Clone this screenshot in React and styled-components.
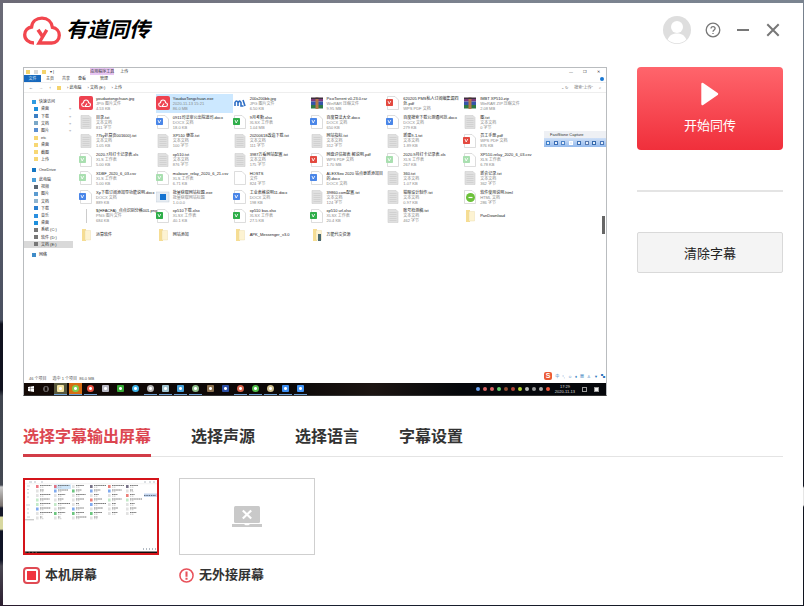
import React, { useState } from "react";
import styled, { createGlobalStyle } from "styled-components";

const files = [
    ["youdao", "youdaotongchuan.jpg", "JPG 图片文件", "4.53 KB"],
    ["youdao", "YoudaoTongchuan.exe", "2020-11-13 15:21", "86.0 MB"],
    ["m", "200x200bb.jpg", "JPG 图片文件", "6.50 KB"],
    ["zip", "PicoTorrent v0.23.0.rar", "WinRAR 压缩文件", "9.95 MB"],
    ["pdf", "620205 PMS私人订阅编集漏四处.pdf", "WPS PDF 文档"],
    ["zip", "IMBT XP510.zip", "WinRAR ZIP 压缩文件", "2.08 MB"],
    ["txt", "目录.txt", "文本文档", "811 字节"],
    ["doc", "0911司法审公出院遗司.docx", "DOCX 文档", "18.0 KB"],
    ["xls", "9月考勤.xlsx", "XLSX 工作表", "1.04 MB"],
    ["doc", "百度算法大全.docx", "DOCX 文档", "650 KB"],
    ["doc", "百度搜索下载公测通问范.docx", "DOCX 文档", "279 KB"],
    ["txt", "图.txt", "文本文档", "0 字节"],
    ["txt", "77ky扒算页001600).txt", "文本文档", "1.05 KB"],
    ["txt", "XP510 便签.txt", "文本文档", "100 字节"],
    ["txt", "20200618改造下载.txt", "文本文档", "111 字节"],
    ["txt", "网站指标.txt", "文本文档", "312 字节"],
    ["txt", "新建9-1.txt", "文本文档", "1.89 KB"],
    ["pdf", "员工手册.pdf", "WPS PDF 文档", "876 KB"],
    ["csv", "2020.7月打卡记录表.xls", "XLS 工作表", "5.00 KB"],
    ["txt", "xp510.txt", "文本文档", "876 字节"],
    ["txt", "3987万看网站配置.txt", "文本文档", "175 字节"],
    ["pdf", "网盘评估报表·解说明.pdf", "WPS PDF 文档", "1.70 MB"],
    ["csv", "2020.9月打卡记录表.xls", "XLS 工作表", "267 KB"],
    ["csv", "XP510-relay_2020_6_03.csv", "XLS 工作表", "6.78 KB"],
    ["csv", "XDBF_2020_6_03.csv", "XLS 工作表", "5.00 KB"],
    ["csv", "malware_relay_2020_6_21.csv", "XLS 工作表", "6.71 KB"],
    ["blank", "HOSTS", "文件", "824 字节"],
    ["doc", "ALEXSeo 2020 站点更新添加目的.docx", "DOCX 文档"],
    ["txt", "360.txt", "文本文档", "1.07 KB"],
    ["txt", "新会记录.txt", "文本文档", "362 字节"],
    ["doc", "Xp下载订阅添加导功能说明.docx", "DOCX 文档", "889 KB"],
    ["exe", "批量获取网站标题.exe", "批量获取网站标题", "1.0.0.0"],
    ["doc", "工业表格说明11.docx", "DOCX 文档", "198 KB"],
    ["txt", "39860.com配置.txt", "文本文档", "124 字节"],
    ["txt", "猫眼设计制作.txt", "文本文档", "0.97 KB"],
    ["html", "软件使用说明.html", "HTML 文档", "286 字节"],
    ["line", "$(HFACFA)_点点识别分格001.png", "PNG 图片文件", "684 KB"],
    ["xls", "xp510下载.xlsx", "XLSX 工作表", "40.1 KB"],
    ["xls", "xp510 bas.xlsx", "XLSX 工作表", "27.5 KB"],
    ["xls", "xp510 url.xlsx", "XLSX 工作表", "20.4 KB"],
    ["txt", "账号检测稿.txt", "文本文档", "462 字节"],
    ["folder", "PanDownload"],
    ["folder", "运算软件"],
    ["folder", "网站添加"],
    ["folder", "APK_Messenger_v3.0"],
    ["folder2", "万能代交资源"],
];

const places = [
    { rows: ["快速访问", "桌面", "下载", "文档", "图片", "etc", "桌面", "截图", "上传"], colors: ["#2f9be0", "#1d8fdc", "#3b7fc4", "#7aa7c7", "#5b8fd0", "#f7d774", "#f7d774", "#f7d774", "#f7d774"] },
    { rows: ["OneDrive"], colors: ["#1577c4"] },
    { rows: ["此电脑", "视频", "图片", "文档", "下载", "音乐", "桌面", "系统 (C:)", "软件 (D:)", "文档 (E:)"], colors: ["#4b9ed8", "#5b6672", "#5b9bd0", "#8fb4cf", "#2a7fd0", "#2a8fe0", "#1d8fdc", "#777", "#777", "#777"] },
    { rows: ["网络"], colors: ["#3f8cc8"] },
];

const apps = [
    ["#f2e3a0", "#57573c"], ["#7dcf4f", "#d56d14"], ["#e9503f"], ["#b9b9c4"], ["#35a935"], ["#3fb4e8"],
    ["#b8b8b8"], ["#9fc3cf"], ["#45a0d8"], ["#8fbf8b"], ["#8a704e"], ["#2c4fa5"], ["#d9624a"], ["#52c14c"],
    ["#cfc08e"], ["#3c8df0"], ["#4295f5"],
];

const tray = ["#6aa0ee", "#d86464", "#d86464", "#63c96b", "#8d4a30", "#b04438", "#b5d332", "#bbb", "#999", "#aaa", "#f0573b"];

const tabs = ["选择字幕输出屏幕", "选择声源", "选择语言", "字幕设置"];

const badge = { doc: "#4a86e8", xls: "#2fae4a", pdf: "#e3493f", csv: "#a9dfb0" };

function Logo() {
    return (
        <svg width="38" height="29" viewBox="0 0 38 29" fill="none" stroke="#f2464e" strokeWidth="3.3" aria-hidden="true">
            <path d="M11 27C5.5 27 1.7 23.3 1.7 18.7C1.7 14.2 5 11.6 8.6 11C9.2 5.6 13.4 2.2 19 2.2C24.6 2.2 28.7 5.8 29.4 11.4C33.4 12 36.3 15.2 36.3 19.3C36.3 23.8 33 27 28.8 27H16L23.8 13.8" />
            <path d="M15 13.8L19.6 20.6" strokeWidth="3.6" />
        </svg>
    );
}

function FileIcon({ type }) {
    const sheet = <path d="M1.5 .5H9L12.5 4V13.5H1.5Z" fill="#fff" stroke="#cfcfcf" strokeWidth=".7" />;
    return (
        <svg width="14" height="14" viewBox="0 0 14 14" aria-hidden="true">
            {type === "youdao" && (
                <g>
                    <rect width="14" height="14" rx="2" fill="#ee4250" />
                    <path d="M5 10.5C2 10.5 2 7 4.5 6.7C4.8 3 9.2 3 9.6 6.7C12.3 7 12 10.5 9.5 10.5H6L8 7.5" fill="none" stroke="#fff" strokeWidth="1.1" />
                </g>
            )}
            {type === "m" && (
                <g>
                    <rect x=".5" width="13" height="14" fill="#fff" />
                    <path d="M2 10V6.5Q3.5 3.5 5 6.5V10M5 7Q6.5 3.5 8 6.5V10H10.5M10 4L12 10" fill="none" stroke="#2f6fc5" strokeWidth="1.6" />
                </g>
            )}
            {type === "zip" && (
                <g>
                    <rect x="1" y="2" width="12" height="3.5" fill="#7c3b7e" />
                    <rect x="1" y="5.5" width="12" height="3.5" fill="#3457a8" />
                    <rect x="1" y="9" width="12" height="3.5" fill="#2f7a45" />
                    <rect x="5.5" y="1.5" width="3" height="11.5" fill="#b5794a" />
                    <rect x="1" y="1.5" width="12" height="1.5" fill="#3d2f3c" />
                </g>
            )}
            {type === "txt" && (
                <g>
                    <path d="M2 .5H10L12 2.5V13.5H2Z" fill="#e0e0e0" stroke="#cdcdcd" strokeWidth=".6" />
                    <path d="M3.5 3.5H10.5M3.5 5.5H10.5M3.5 7.5H10.5M3.5 9.5H10.5M3.5 11.5H10.5" stroke="#c6c6c6" strokeWidth=".6" />
                </g>
            )}
            {type === "blank" && sheet}
            {badge[type] && (
                <g>
                    {sheet}
                    <rect x="0" y="3" width="7" height="7" rx=".7" fill={badge[type]} />
                    <path d="M2 5L3.2 8L4.8 5" fill="none" stroke="#fff" strokeWidth=".8" />
                </g>
            )}
            {type === "exe" && (
                <g>
                    <rect x="0" y="2" width="13" height="10" fill="#e7edf3" stroke="#c2ccd6" strokeWidth=".5" />
                    <rect x="4" y="4" width="6" height="6" fill="#1674d1" />
                </g>
            )}
            {type === "html" && (
                <g>
                    {sheet}
                    <circle cx="7.5" cy="7.5" r="4.5" fill="#6cc13a" />
                    <path d="M5.5 7.5H9.5" stroke="#fff" strokeWidth="1.2" />
                </g>
            )}
            {type === "line" && <path d="M7.5 0V14" stroke="#ccc" />}
            {(type === "folder" || type === "folder2") && (
                <g>
                    <path d="M3 1H7V13H3Z" fill="#f6dd93" />
                    <path d="M6 2.5H11.5V12H6Z" fill="#fdf3d2" stroke="#ead9a5" strokeWidth=".4" />
                    {type === "folder2" && <path d="M8 6H11V13H8Z" fill="#4b6a70" />}
                </g>
            )}
        </svg>
    );
}

// Small schematic of the desktop, used in the screen picker
function DesktopThumb() {
    return (
        <ThumbSvg viewBox="0 0 132 73" preserveAspectRatio="none" aria-hidden="true">
            <rect width="132" height="73" fill="#fff" />
            <path d="M4 2H7M9 2H11M16 2H18M119 2H121M124 2H126M128 2H130" stroke="#9aa5b0" strokeWidth=".7" />
            <path d="M0 3.7H132" stroke="#ececec" strokeWidth=".6" />
            <rect x="29" y="4.5" width="17" height="4.5" fill="#cfe6fa" />
            {files.map(([type, name], i) => {
                const x = 11 + (i % 6) * 18;
                const y = 5 + Math.floor(i / 6) * 4.5;
                return (
                    <g key={i}>
                        <rect x={x} y={y} width="2.6" height="3" fill={type === "youdao" ? "#e8404e" : type === "zip" ? "#3e3654" : badge[type] || "#d6d6d6"} opacity=".7" />
                        <path d={`M${x + 4} ${y + .5}h${Math.min(name.length * .6, 12)}`} stroke="#555" strokeWidth=".8" strokeDasharray="1.6 .5" />
                        <path d={`M${x + 4} ${y + 2.2}h4`} stroke="#aaa" strokeWidth=".6" strokeDasharray="1.2 .6" />
                    </g>
                );
            })}
            <path d="M2 6H5M2 9.5H4M2 13H4M2 17H4M1 25H5M2 29H4M2 33H4M2 37H5" stroke="#b4bdc6" strokeWidth=".7" />
            <rect y="39" width="9" height="1.4" fill="#ccc" />
            <rect x="119" y="13.5" width="13" height="3.4" fill="#c5d6f0" />
            <path d="M119 15.5H131" stroke="#456" strokeWidth=".8" strokeDasharray="1.5 .8" />
            <path d="M118 69H131" stroke="#678" strokeDasharray="1 2" />
            <rect y="71.5" width="132" height="1.5" fill="#120d0d" />
            <path d="M0 72H14" stroke="#a98" strokeWidth=".8" strokeDasharray="1.5 2" />
        </ThumbSvg>
    );
}

function Desktop() {
    return (
        <Screen>
            <TitleRow>
                <Dot color="#f4d36d" /><Dot color="#d9d9d9" /><Dot color="#f4d36d" />
                <span>▾ |</span>
                <ToolTab>应用程序工具</ToolTab>
                <span>上传</span>
                <Caption><span>—</span><span>❐</span><span>✕</span></Caption>
            </TitleRow>
            <RibbonRow>
                <FileTab>文件</FileTab>
                <span>主页</span><span>共享</span><span>查看</span><ManageTab>管理</ManageTab>
                <HelpDot />
            </RibbonRow>
            <AddressRow>
                <span>←</span><Faint>→</Faint><span>↑</span>
                <Dot color="#f4d36d" />
                <span>› 此电脑</span><span>› 文档 (E:)</span><span>› 上传</span>
                <Search><span>⌄ ↻</span><span>搜索"上传"</span><span>⌕</span></Search>
            </AddressRow>
            <Explorer>
                <Side>
                    {places.map((group, g) => (
                        <Group key={g} count={group.rows.length}>
                            {group.rows.map((row, i) => (
                                <Place key={i} $root={i === 0} $active={row === "文档 (E:)"}>
                                    <Dot color={group.colors[i]} />
                                    <span>{row}</span>
                                    {g === 0 && i > 0 && i < 5 && <Pin>⌖</Pin>}
                                </Place>
                            ))}
                        </Group>
                    ))}
                </Side>
                <Files>
                    {files.map(([type, name, kind, size], i) => (
                        <File key={i} $active={i === 1}>
                            <FileIcon type={type} />
                            <FileText>
                                <FileName $wrap={!size}>{name}</FileName>
                                {kind && <div>{kind}</div>}
                                {size && <div>{size}</div>}
                            </FileText>
                        </File>
                    ))}
                </Files>
                <ScrollTrack><ScrollThumb /></ScrollTrack>
            </Explorer>
            <Status><span>46 个项目</span><span>选中 1 个项目&nbsp; 86.0 MB</span></Status>
            <Taskbar>
                <AppSlot>
                    <svg width="6" height="6" viewBox="0 0 6 6"><path d="M0 1L2.7 .6V2.8H0ZM3 .5L6 0V2.8H3ZM0 3.1H2.7V5.4L0 5ZM3 3.1H6V6L3 5.5Z" fill="#fff" /></svg>
                </AppSlot>
                <AppSlot>
                    <svg width="6" height="6" viewBox="0 0 6 6"><path d="M1.3 .7H4.7V5.3H1.3ZM.3 1.5V4.5M5.7 1.5V4.5" fill="none" stroke="#aaa" strokeWidth=".6" /></svg>
                </AppSlot>
                {apps.map(([color, back], i) => (
                    <AppSlot key={i} $back={back} $open={![3, 4, 5, 10, 11].includes(i)}>
                        <AppMark $color={color} $round={[1, 2, 5, 6, 9, 12, 13, 14].includes(i)} />
                    </AppSlot>
                ))}
                <Tray>
                    {tray.map((color, i) => <TrayDot key={i} $color={color} />)}
                    <Clock><span>17:29</span><span>2020-11-13</span></Clock>
                    <TrayBox /><TrayBox $solid />
                </Tray>
            </Taskbar>
            <Capture>
                <CaptureTitle>FastStone Capture</CaptureTitle>
                <CaptureTools>
                    {["#3e7fc9", "#3b6db5", "#4d83c8", "#fff", "#3e6fb2", "#5a7bb0", "#3468ab", "#4a77b8"].map((c, i) => <ToolMark key={i} $color={c} />)}
                </CaptureTools>
            </Capture>
            <Ime>
                <ImeLogo>S</ImeLogo>
                <span>中</span><span>°,</span><span>☺</span><span>♦</span><span>▦</span><span>♙</span><span>▼</span><span>▚</span>
            </Ime>
        </Screen>
    );
}

function App() {
    const [tab, setTab] = useState(0);
    return (
        <Frame>
            <Global />
            <Window>
                <Header>
                    <Brand><Logo /><BrandName>有道同传</BrandName></Brand>
                    <Avatar aria-label="账号">
                        <svg width="28" height="28" viewBox="0 0 28 28">
                            <circle cx="14" cy="14" r="14" fill="#dedede" />
                            <circle cx="14" cy="11" r="6" fill="#fff" />
                            <path d="M4.7 23.5C6.5 18.8 10 17.4 14 17.4C18 17.4 21.5 18.8 23.3 23.5A13.2 13.2 0 0 1 4.7 23.5Z" fill="#fff" />
                        </svg>
                    </Avatar>
                    <HeadButton aria-label="帮助">
                        <svg width="16" height="16" viewBox="0 0 16 16" fill="none" stroke="#777" strokeWidth="1.3">
                            <circle cx="8" cy="8" r="6.8" />
                            <path d="M6 6.6C6 3.9 10.1 4 10.1 6.5C10.1 8 8 7.9 8 9.7M8 10.9V12.1" />
                        </svg>
                    </HeadButton>
                    <HeadButton aria-label="最小化">
                        <svg width="16" height="16" viewBox="0 0 16 16" stroke="#777" strokeWidth="2"><path d="M2 8H14" /></svg>
                    </HeadButton>
                    <HeadButton aria-label="关闭">
                        <svg width="16" height="16" viewBox="0 0 16 16" stroke="#777" strokeWidth="2"><path d="M2.3 2.3L13.7 13.7M13.7 2.3L2.3 13.7" /></svg>
                    </HeadButton>
                </Header>
                <Main>
                    <Desktop />
                    <Actions>
                        <StartButton>
                            <svg width="18" height="24" viewBox="0 0 18 24"><path d="M1.5 2L16 12L1.5 22Z" fill="#fff" stroke="#fff" strokeWidth="2.4" strokeLinejoin="round" /></svg>
                            开始同传
                        </StartButton>
                        <Divider />
                        <ClearButton>清除字幕</ClearButton>
                    </Actions>
                </Main>
                <Tabs>
                    {tabs.map((name, i) => (
                        <Tab key={name} $active={i === tab} onClick={() => setTab(i)}>{name}</Tab>
                    ))}
                </Tabs>
                <Screens>
                    <Choice>
                        <Thumb $active><DesktopThumb /></Thumb>
                        <ChoiceName>
                            <Radio type="radio" name="screen" defaultChecked />
                            本机屏幕
                        </ChoiceName>
                    </Choice>
                    <Choice as="div">
                        <Thumb>
                            <svg width="30" height="22" viewBox="0 0 30 22" aria-hidden="true">
                                <rect x="2" y="0" width="26" height="17" rx="1.5" fill="#c9c9c9" />
                                <path d="M0 18H12L13.5 19.2H16.5L18 18H30V21H0Z" fill="#c9c9c9" />
                                <path d="M10.8 4.5L19.2 12.5M19.2 4.5L10.8 12.5" stroke="#fff" strokeWidth="2.2" />
                            </svg>
                        </Thumb>
                        <ChoiceName>
                            <svg width="15" height="15" viewBox="0 0 16 16" fill="none" stroke="#e8515a" aria-hidden="true">
                                <circle cx="8" cy="8" r="7" strokeWidth="1.6" />
                                <path d="M8 3.8V9.2M8 10.4V12.4" strokeWidth="2.2" />
                            </svg>
                            无外接屏幕
                        </ChoiceName>
                    </Choice>
                </Screens>
            </Window>
        </Frame>
    );
}

const Global = createGlobalStyle`
    * { box-sizing: border-box; }
    body {
        margin: 0;
        font-family: "Liberation Sans", "Noto Sans CJK SC", sans-serif;
        color: #222;
    }
    button {
        font-family: inherit;
        padding: 0;
        border: 0;
        background: none;
        cursor: pointer;
    }
    svg { display: block; flex: none; }
`

const Frame = styled.div`
    display: flex;
    min-height: 100vh;
    padding: 3px 1px 3px 3px;
    background:
        linear-gradient(90deg, #6c6a76, #7c838f 60%, #7a8490) top / 100% 3px no-repeat,
        linear-gradient(90deg, #2a1c2e, #1a2233 30%, #141722) bottom / 100% 3px no-repeat,
        linear-gradient(#6b6b77, #4a5060 320px, #10121f 324px, #10121f 390px, #40454f 396px, #434852 485px, #c9c9c9 487px, #77706c 506px, #15182a 508px, #15182a 516px, #d8d8a0 517px, #d8d8a0 529px, #101426 531px, #101426 560px, #4a4852 566px, #2a1c2e) left / 3px 100% no-repeat,
        linear-gradient(#7a8490, #39404c 300px, #10141f 400px, #10141f 486px, #e5e5e5 488px, #e5e5e5 505px, #10141f 507px) right / 1px 100% no-repeat;
`

const Window = styled.div`
    flex: 1;
    min-width: 0;
    padding: 0 20px 20px;
    background: #fff;
`

const Header = styled.header`
    display: flex;
    align-items: center;
    height: 54px;
    margin: 0 -5px 10px 0;
`

const Brand = styled.div`
    display: flex;
    align-items: center;
    gap: 5px;
    margin-right: auto;
`

const BrandName = styled.h1`
    margin: 0;
    font-size: 21px;
    line-height: 28px;
    font-style: italic;
    font-weight: 700;
    color: #000;
`

const Avatar = styled.button`
    margin-right: 7px;
    border-radius: 50%;
`

const HeadButton = styled.button`
    display: flex;
    align-items: center;
    justify-content: center;
    width: 30px;
    height: 30px;
`

const Main = styled.main`
    display: grid;
    grid-template-columns: minmax(0, 1fr) 146px;
    gap: 30px;
`

const Screen = styled.div`
    position: relative;
    display: flex;
    flex-direction: column;
    aspect-ratio: 584 / 329;
    border: 1px solid #b9bcbf;
    border-bottom-color: #333;
    overflow: hidden;
    font-size: 4px;
    line-height: 5px;
    color: #333;
    white-space: nowrap;
`

const TitleRow = styled.div`
    display: flex;
    align-items: center;
    gap: 4px;
    height: 7px;
    padding: 0 6px 0 2px;
`

const Dot = styled.i`
    flex: none;
    width: 4px;
    height: 4px;
    background: ${p => p.color};
`

const ToolTab = styled.span`
    margin: 0 2px 0 32px;
    height: 7px;
    line-height: 7px;
    background: #e8c6f3;
`

const Caption = styled.div`
    display: flex;
    gap: 10px;
    margin-left: auto;
`

const RibbonRow = styled.div`
    display: flex;
    align-items: center;
    gap: 8px;
    height: 8px;
    border-bottom: 1px solid #eee;
`

const FileTab = styled.span`
    width: 17px;
    height: 7px;
    margin-right: -3px;
    line-height: 7px;
    text-align: center;
    color: #dcebfa;
    background: #1768bd;
`

const ManageTab = styled.span`
    margin-left: 6px;
`

const HelpDot = styled.i`
    width: 4px;
    height: 4px;
    margin: 0 2px 0 auto;
    border-radius: 50%;
    background: #1877d2;
`

const AddressRow = styled.div`
    display: flex;
    align-items: center;
    gap: 6px;
    height: 10px;
    padding: 0 5px;
    border-bottom: 1px solid #eee;
`

const Faint = styled.span`
    color: #aaa;
`

const Search = styled.div`
    display: flex;
    gap: 6px;
    margin-left: auto;
    color: #777;
`

const Explorer = styled.div`
    flex: 1;
    display: flex;
    align-items: flex-start;
`

const Side = styled.div`
    width: 49px;
    padding-top: 5px;
`

const Group = styled.div`
    display: grid;
    grid-auto-rows: 1fr;
    height: ${p => p.count === 9 ? 65 : p.count === 10 ? 72 : 7}px;
    margin-bottom: 3px;
`

const Place = styled.div`
    display: flex;
    align-items: center;
    gap: 3px;
    padding: 0 2px 0 ${p => p.$root ? 8 : 10}px;
    background: ${p => p.$active ? "#d9d9d9" : "none"};
`

const Pin = styled.span`
    margin-left: auto;
    color: #999;
`

const Files = styled.div`
    flex: 1;
    display: grid;
    grid-template-columns: repeat(6, minmax(0, 1fr));
    grid-template-rows: repeat(8, minmax(0, 1fr));
    height: 150px;
    margin: 1px 62px 0 6px;
`

const File = styled.div`
    display: flex;
    align-items: center;
    gap: 3px;
    min-width: 0;
    background: ${p => p.$active ? "#cce8ff" : "none"};
`

const FileText = styled.div`
    min-width: 0;
    color: #888;
`

const FileName = styled.div`
    color: #222;
    white-space: ${p => p.$wrap ? "normal" : "nowrap"};
    overflow-wrap: anywhere;
`

const ScrollTrack = styled.div`
    width: 4px;
    padding-top: 123px;
`

const ScrollThumb = styled.div`
    width: 3px;
    height: 18px;
    background: #666;
`

const Status = styled.div`
    display: flex;
    gap: 6px;
    height: 7px;
    padding-left: 5px;
    color: #555;
`

const Taskbar = styled.div`
    display: flex;
    height: 12px;
    background: linear-gradient(90deg, #140a06, #0b0808 45%, #1c1512 60%, #05070b 75%);
`

const AppSlot = styled.div`
    display: flex;
    align-items: center;
    justify-content: center;
    width: 13px;
    margin-right: 2px;
    background: ${p => p.$back || "none"};
    border-bottom: 1px solid ${p => p.$open ? "#6a9cd0" : "transparent"};
`

const AppMark = styled.i`
    width: 7px;
    height: 7px;
    border-radius: ${p => p.$round ? "50%" : "1px"};
    background: radial-gradient(circle, #fff 1px, ${p => p.$color} 2px);
`

const Tray = styled.div`
    display: flex;
    align-items: center;
    gap: 3px;
    margin-left: auto;
    padding-right: 3px;
`

const TrayDot = styled.i`
    width: 4px;
    height: 4px;
    border-radius: 2px;
    background: ${p => p.$color};
`

const Clock = styled.div`
    display: flex;
    flex-direction: column;
    align-items: center;
    margin: 0 4px 0 2px;
    color: #ddd;
`

const TrayBox = styled.i`
    width: 5px;
    height: 5px;
    margin-right: 4px;
    border: 1px solid #999;
    background: ${p => p.$solid ? "#eee" : "none"};
`

// Floating windows sit over the mirrored desktop
const Capture = styled.div`
    position: absolute;
    top: 63px;
    right: 0;
    width: 62px;
`

const CaptureTitle = styled.div`
    height: 7px;
    padding-left: 6px;
    line-height: 7px;
    background: #eef0f4;
`

const CaptureTools = styled.div`
    display: flex;
    align-items: center;
    justify-content: space-around;
    height: 9px;
    background: linear-gradient(#cfe0f7, #93b9ec);
`

const ToolMark = styled.i`
    width: 4px;
    height: 4px;
    border: 1px solid ${p => p.$color};
    background: #e9f1fb;
`

const Ime = styled.div`
    position: absolute;
    right: 1px;
    bottom: 14px;
    display: flex;
    align-items: center;
    gap: 3px;
    height: 10px;
    color: #2873b8;
`

const ImeLogo = styled.span`
    width: 8px;
    height: 8px;
    border-radius: 2px;
    font-size: 7px;
    line-height: 8px;
    font-weight: 700;
    text-align: center;
    color: #fff;
    background: #ec5a33;
`

const Actions = styled.aside`
    display: flex;
    flex-direction: column;
    gap: 40px;
`

const StartButton = styled.button`
    display: flex;
    flex-direction: column;
    align-items: center;
    justify-content: center;
    gap: 10px;
    height: 83px;
    border-radius: 4px;
    font-size: 13px;
    line-height: 20px;
    color: #fff;
    background: linear-gradient(#ff656c, #f02f3b);
`

const Divider = styled.hr`
    width: 100%;
    height: 2px;
    margin: 0;
    border: 0;
    background: #e4e4e4;
`

const ClearButton = styled.button`
    height: 41px;
    border: 1px solid #d9d9d9;
    border-radius: 2px;
    font-size: 13px;
    color: #222;
    background: #f4f4f4;
`

const Tabs = styled.nav`
    display: flex;
    gap: 40px;
    margin-top: 24px;
    box-shadow: inset 0 -1px #e4e4e4;
`

const Tab = styled.button`
    height: 37px;
    border-bottom: 3px solid ${p => p.$active ? "#d23c47" : "transparent"};
    font-size: 16px;
    line-height: 34px;
    font-weight: 700;
    color: ${p => p.$active ? "#dc4650" : "#333"};
`

const Screens = styled.section`
    display: flex;
    gap: 20px;
    margin-top: 21px;
`

const Choice = styled.label`
    width: 136px;
`

const Thumb = styled.div`
    display: flex;
    align-items: center;
    justify-content: center;
    height: 77px;
    border: ${p => p.$active ? "2px solid #d4141a" : "1px solid #cfcfcf"};
`

const ThumbSvg = styled.svg`
    width: 100%;
    height: 100%;
`

const ChoiceName = styled.div`
    display: flex;
    align-items: center;
    gap: 5px;
    margin-top: 10px;
    font-size: 13px;
    line-height: 20px;
    font-weight: 700;
    color: #333;
`

const Radio = styled.input`
    appearance: none;
    width: 17px;
    height: 17px;
    margin: 0;
    border: 2px solid #e04a53;
    border-radius: 4px;
    background: #fff;
    &:checked {
        padding: 2px;
        background: #f0343f content-box;
    }
`

export default App;
